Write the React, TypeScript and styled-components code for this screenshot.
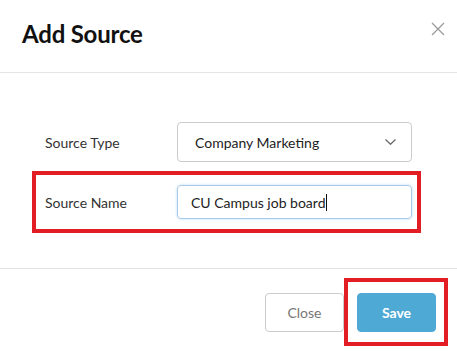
import styled, { createGlobalStyle } from "styled-components";

const GlobalStyle = createGlobalStyle`
    html, body {
        margin: 0;
        padding: 0;
        background: #fff;
    }
    body {
        font-family: Lato, "Open Sans", Arial, sans-serif;
        color: #333;
    }
    * {
        box-sizing: border-box;
    }
`;

const Modal = styled.div`
    width: 457px;
    height: 351px;
    background: #fff;
    display: flex;
    flex-direction: column;
`;

// 헤더
const Header = styled.div`
    height: 73px;
    border-bottom: 1px solid #e5e5e5;
    display: flex;
    justify-content: space-between;
    align-items: flex-start;
    padding: 19px 12px 0 22px;

    h2 {
        margin: 0;
        font-size: 24px;
        font-weight: 700;
        color: #111;
        letter-spacing: -0.2px;
    }
`;

const CloseIcon = styled.button`
    border: none;
    background: none;
    padding: 0;
    margin-top: 3px;
    width: 14px;
    height: 14px;
    cursor: pointer;
    display: flex;

    svg {
        width: 14px;
        height: 14px;
    }
`;

// 본문
const Body = styled.div`
    height: 196px;
    padding: 42px 0 0 32px;
    display: flex;
    flex-direction: column;
    gap: 2px;
    border-bottom: 1px solid #e3e3e6;
`;

const Row = styled.div<{ $highlight?: boolean }>`
    width: 389px;
    height: ${(p) => (p.$highlight ? "62px" : "54px")};
    border: 4px solid ${(p) => (p.$highlight ? "#e21d23" : "transparent")};
    padding: 0 5px 0 9px;
    display: flex;
    align-items: center;
`;

const Label = styled.span`
    width: 132px;
    font-size: 14px;
    color: #333;
`;

const Select = styled.div`
    width: 235px;
    height: 40px;
    border: 1px solid #ccc;
    border-radius: 4px;
    padding: 0 15px 0 17px;
    display: flex;
    align-items: center;
    justify-content: space-between;
    font-size: 14px;
    color: #222;

    svg {
        width: 11px;
        height: 6px;
    }
`;

const Input = styled.div`
    width: 235px;
    height: 34px;
    border: 1px solid #a9cbe9;
    border-radius: 4px;
    box-shadow: 0 0 3px rgba(102, 175, 233, 0.45);
    padding: 0 13px;
    display: flex;
    align-items: center;
    font-size: 14px;
    color: #222;

    i {
        display: inline-block;
        width: 1px;
        height: 17px;
        background: #111;
        margin-left: 1px;
    }
`;

// 푸터
const Footer = styled.div`
    flex: 1;
    display: flex;
    justify-content: flex-end;
    align-items: flex-start;
    padding: 9px 9px 0 0;
`;

const Button = styled.button<{ $primary?: boolean }>`
    width: 79px;
    height: 39px;
    border-radius: 4px;
    font-family: Lato, Arial, sans-serif;
    font-size: 14px;
    cursor: pointer;
    border: 1px solid ${(p) => (p.$primary ? "#4ea9d5" : "#ccc")};
    background: ${(p) => (p.$primary ? "#4ea9d5" : "#fff")};
    color: ${(p) => (p.$primary ? "#fff" : "#777")};
    font-weight: ${(p) => (p.$primary ? 700 : 400)};
`;

const CloseButton = styled(Button)`
    margin-top: 15px;
`;

const Highlight = styled.div`
    width: 104px;
    height: 68px;
    border: 4px solid #e21d23;
    display: flex;
    align-items: center;
    justify-content: center;
    padding-left: 1px;
`;

const App = () => {
    return (
        <>
            <GlobalStyle />
            <Modal>
                <Header>
                    <h2>Add Source</h2>
                    <CloseIcon aria-label='close'>
                        <svg viewBox='0 0 14 14'>
                            <path
                                d='M1 1 L13 13 M13 1 L1 13'
                                stroke='#999'
                                strokeWidth='1.2'
                                fill='none'
                            />
                        </svg>
                    </CloseIcon>
                </Header>

                <Body>
                    <Row>
                        <Label>Source Type</Label>
                        <Select>
                            <span>Company Marketing</span>
                            <svg viewBox='0 0 11 6'>
                                <path
                                    d='M0.5 0.5 L5.5 5.3 L10.5 0.5'
                                    stroke='#666'
                                    strokeWidth='1.2'
                                    fill='none'
                                />
                            </svg>
                        </Select>
                    </Row>
                    <Row $highlight>
                        <Label>Source Name</Label>
                        <Input>
                            CU Campus job board<i />
                        </Input>
                    </Row>
                </Body>

                <Footer>
                    <CloseButton>Close</CloseButton>
                    <Highlight>
                        <Button $primary>Save</Button>
                    </Highlight>
                </Footer>
            </Modal>
        </>
    );
};

export default App;
